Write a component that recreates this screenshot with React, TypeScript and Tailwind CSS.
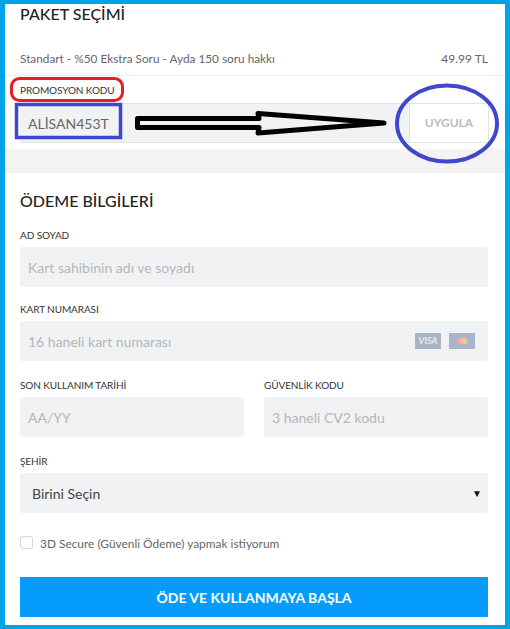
import React from "react";

const label = "block text-[10px] leading-[12px] text-[#333] font-['Lato',sans-serif] tracking-[-0.1px]";
const field = "h-10 bg-[#f1f2f4] rounded-[2px] flex items-center px-2 text-[14px] text-[#b4b7ba]";

function Field({ title, text, className = "" }: { title: string; text: string; className?: string }) {
  return (
    <div className={className}>
      <span className={label}>{title}</span>
      <div className={`${field} mt-[6px]`}>{text}</div>
    </div>
  );
}

export default function App() {
  return (
    <div className="relative w-[510px] h-[629px] overflow-hidden bg-[#00a2e8] pt-1 pl-[5px] pr-[5px] pb-1 font-['Lato',sans-serif]">
      <div className="h-full bg-white flex flex-col">
        <div className="px-[15px]">
          <h2 className="text-[16px] leading-[20px] text-[#222] font-medium">PAKET SEÇİMİ</h2>
          <div className="flex justify-between items-center mt-[27px] pb-[8px] text-[11.8px] leading-[16px] text-[#666] pr-[2px]">
            <span>Standart - %50 Ekstra Soru - Ayda 150 soru hakkı</span>
            <span className="text-[12px]">49.99 TL</span>
          </div>
        </div>
        <div className="border-t border-[#eeeeee] pt-[8px]">
          <div className="px-[15px]">
            <span className={label}>PROMOSYON KODU</span>
            <div className="mt-[7px] h-10 bg-[#f1f2f4] border-y border-[#e0e0e0] flex items-center justify-between pl-2 pr-[0px] text-[14px] text-[#666] mr-[1px]">
              <span>ALİSAN453T</span>
              <div className="w-[80px] h-[40px] bg-white border border-[#e2e2e2] flex items-center justify-center text-[12px] font-bold text-[#bcbcbc]">UYGULA</div>
            </div>
          </div>
          <div className="h-6 bg-[#f3f3f3] mt-[6px]" />
        </div>
        <div className="px-[15px] pr-[17px] flex-1">
          <h2 className="text-[16px] leading-[20px] mt-[18px] text-[#222] font-medium">ÖDEME BİLGİLERİ</h2>
          <Field title="AD SOYAD" text="Kart sahibinin adı ve soyadı" className="mt-[18px]" />
          <div className="mt-[16px] relative">
            <Field title="KART NUMARASI" text="16 haneli kart numarası" />
            <div className="absolute right-[13px] top-[30px] flex gap-[8px]">
              <div className="w-[26px] h-4 bg-[#a8b4c7] flex items-center justify-center text-[9px] font-bold italic text-[#e8ecf2]">VISA</div>
              <div className="w-[26px] h-4 bg-[#a8b4c7] flex items-center justify-center">
                <svg width="14" height="8" viewBox="0 0 14 8"><circle cx="5" cy="4" r="3.5" fill="#f0a9a0" /><circle cx="9" cy="4" r="3.5" fill="#f3c98e" fillOpacity="0.85" /></svg>
              </div>
            </div>
          </div>
          <div className="mt-[18px] grid grid-cols-2 gap-5">
            <Field title="SON KULLANIM TARİHİ" text="AA/YY" />
            <Field title="GÜVENLİK KODU" text="3 haneli CV2 kodu" />
          </div>
          <div className="mt-[18px]">
            <span className={label}>ŞEHİR</span>
            <div className={`${field} mt-[6px] justify-between !pl-3 !pr-[6px] !text-[#444]`}>
              <span>Birini Seçin</span>
              <span className="text-[10px] text-[#111]">▼</span>
            </div>
          </div>
          <div className="mt-[22px] flex items-center gap-[7px] text-[11.9px] leading-[14px] text-[#666]">
            <span className="w-[13px] h-[13px] border border-[#d5d5d5] rounded-[3px] bg-white" />
            <span className="translate-y-[2px]">3D Secure (Güvenli Ödeme) yapmak istiyorum</span>
          </div>
          <button className="mt-[28px] w-full h-10 bg-[#069cfb] text-white text-[14px] font-bold">ÖDE VE KULLANMAYA BAŞLA</button>
        </div>
      </div>

      {/* Hand-drawn annotations over the screenshot */}
      <svg className="absolute left-0 top-0 pointer-events-none" width="510" height="180" viewBox="0 0 510 180" fill="none">
        <rect x="11.5" y="78.5" width="111" height="22" rx="8" stroke="#ed1c24" strokeWidth="3" />
        <rect x="16.5" y="104.5" width="104" height="33" stroke="#3f48cc" strokeWidth="3.5" />
        <path d="M137.5 118.5 H259 L258 113.5 L384 123 L258 133 L259 127.5 H137.5 Z" stroke="#000" strokeWidth="5" strokeLinejoin="round" fill="#f1f2f4" />
        <ellipse cx="447" cy="123.5" rx="50" ry="38" stroke="#3f48cc" strokeWidth="4" />
      </svg>
    </div>
  );
}
